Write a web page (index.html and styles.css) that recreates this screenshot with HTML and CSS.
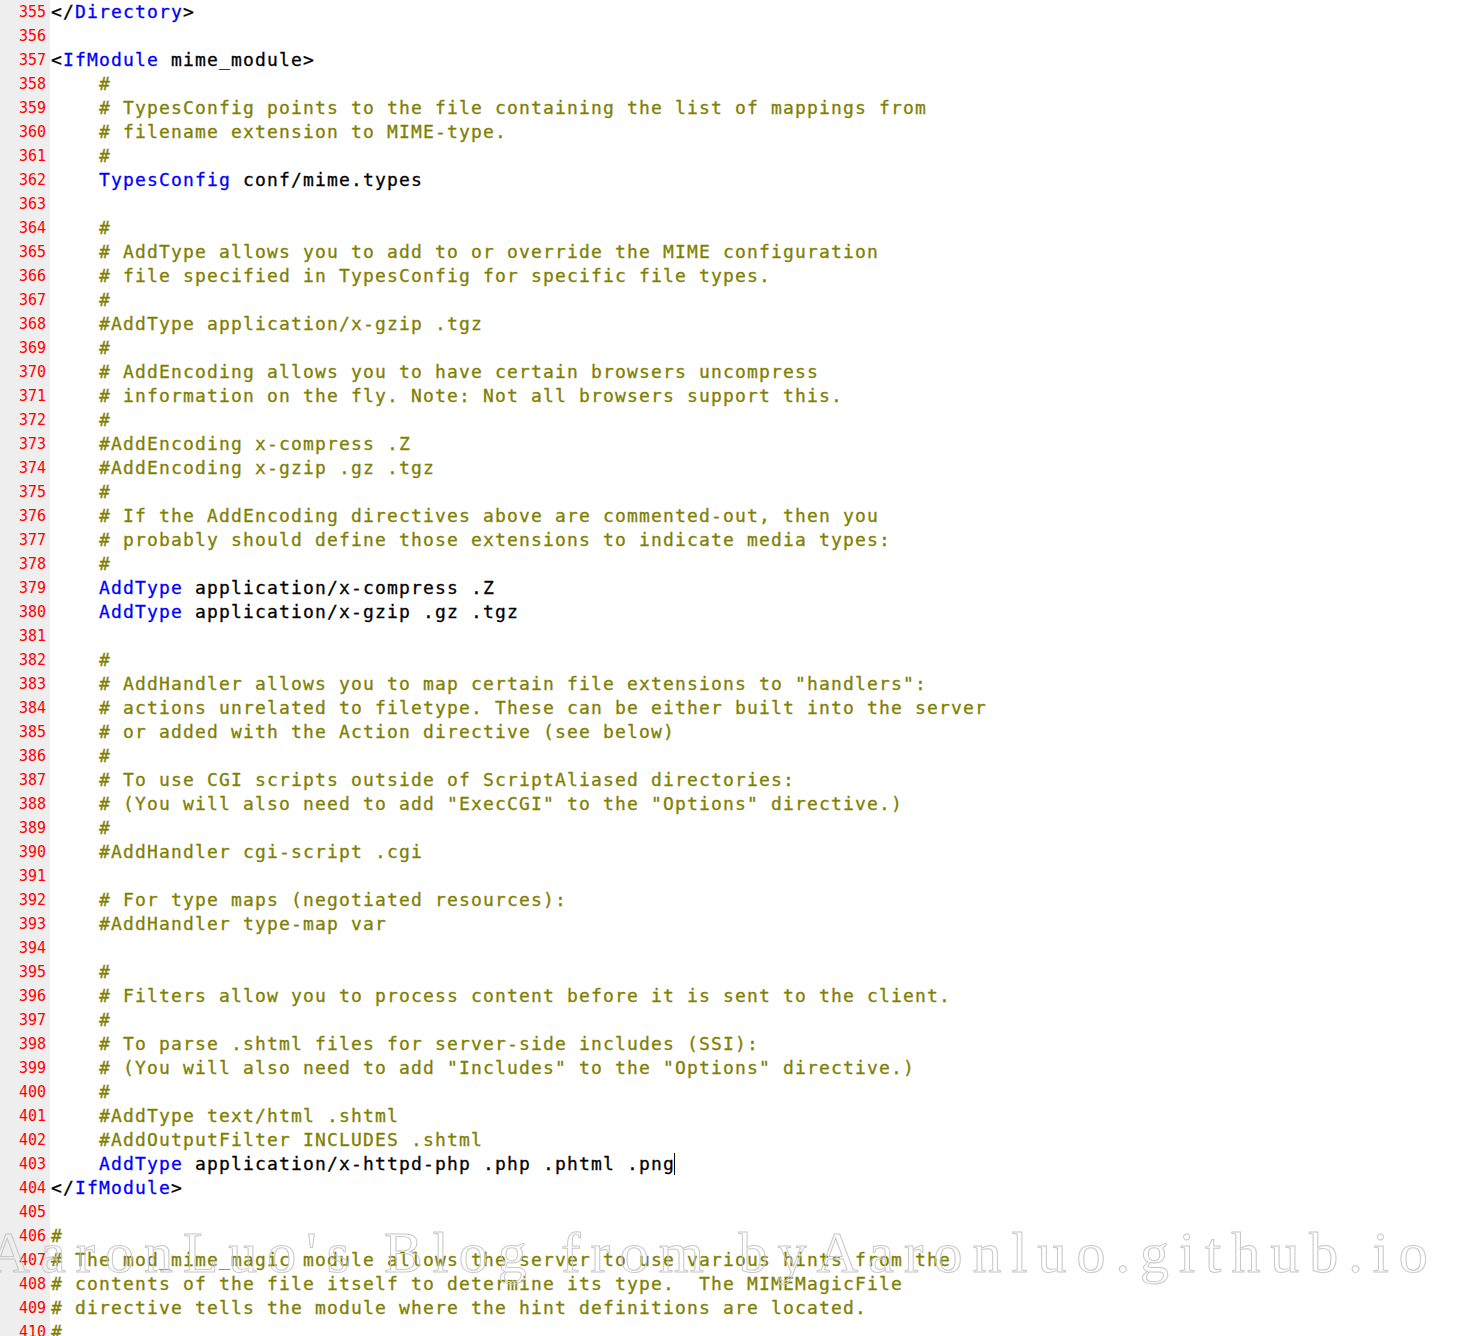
FILE: index.html
```html
<!DOCTYPE html>
<html>
<head>
<meta charset="utf-8">
<link rel="stylesheet" href="styles.css">
</head>
<body>
<div class="editor">
<div class="line"><span class="ln">355</span><span class="code">&lt;/<span class="k">Directory</span>&gt;</span></div>
<div class="line"><span class="ln">356</span><span class="code"></span></div>
<div class="line"><span class="ln">357</span><span class="code">&lt;<span class="k">IfModule</span> mime_module&gt;</span></div>
<div class="line"><span class="ln">358</span><span class="code">    <span class="c">#</span></span></div>
<div class="line"><span class="ln">359</span><span class="code">    <span class="c"># TypesConfig points to the file containing the list of mappings from</span></span></div>
<div class="line"><span class="ln">360</span><span class="code">    <span class="c"># filename extension to MIME-type.</span></span></div>
<div class="line"><span class="ln">361</span><span class="code">    <span class="c">#</span></span></div>
<div class="line"><span class="ln">362</span><span class="code">    <span class="k">TypesConfig</span> conf/mime.types</span></div>
<div class="line"><span class="ln">363</span><span class="code"></span></div>
<div class="line"><span class="ln">364</span><span class="code">    <span class="c">#</span></span></div>
<div class="line"><span class="ln">365</span><span class="code">    <span class="c"># AddType allows you to add to or override the MIME configuration</span></span></div>
<div class="line"><span class="ln">366</span><span class="code">    <span class="c"># file specified in TypesConfig for specific file types.</span></span></div>
<div class="line"><span class="ln">367</span><span class="code">    <span class="c">#</span></span></div>
<div class="line"><span class="ln">368</span><span class="code">    <span class="c">#AddType application/x-gzip .tgz</span></span></div>
<div class="line"><span class="ln">369</span><span class="code">    <span class="c">#</span></span></div>
<div class="line"><span class="ln">370</span><span class="code">    <span class="c"># AddEncoding allows you to have certain browsers uncompress</span></span></div>
<div class="line"><span class="ln">371</span><span class="code">    <span class="c"># information on the fly. Note: Not all browsers support this.</span></span></div>
<div class="line"><span class="ln">372</span><span class="code">    <span class="c">#</span></span></div>
<div class="line"><span class="ln">373</span><span class="code">    <span class="c">#AddEncoding x-compress .Z</span></span></div>
<div class="line"><span class="ln">374</span><span class="code">    <span class="c">#AddEncoding x-gzip .gz .tgz</span></span></div>
<div class="line"><span class="ln">375</span><span class="code">    <span class="c">#</span></span></div>
<div class="line"><span class="ln">376</span><span class="code">    <span class="c"># If the AddEncoding directives above are commented-out, then you</span></span></div>
<div class="line"><span class="ln">377</span><span class="code">    <span class="c"># probably should define those extensions to indicate media types:</span></span></div>
<div class="line"><span class="ln">378</span><span class="code">    <span class="c">#</span></span></div>
<div class="line"><span class="ln">379</span><span class="code">    <span class="k">AddType</span> application/x-compress .Z</span></div>
<div class="line"><span class="ln">380</span><span class="code">    <span class="k">AddType</span> application/x-gzip .gz .tgz</span></div>
<div class="line"><span class="ln">381</span><span class="code"></span></div>
<div class="line"><span class="ln">382</span><span class="code">    <span class="c">#</span></span></div>
<div class="line"><span class="ln">383</span><span class="code">    <span class="c"># AddHandler allows you to map certain file extensions to "handlers":</span></span></div>
<div class="line"><span class="ln">384</span><span class="code">    <span class="c"># actions unrelated to filetype. These can be either built into the server</span></span></div>
<div class="line"><span class="ln">385</span><span class="code">    <span class="c"># or added with the Action directive (see below)</span></span></div>
<div class="line"><span class="ln">386</span><span class="code">    <span class="c">#</span></span></div>
<div class="line"><span class="ln">387</span><span class="code">    <span class="c"># To use CGI scripts outside of ScriptAliased directories:</span></span></div>
<div class="line"><span class="ln">388</span><span class="code">    <span class="c"># (You will also need to add "ExecCGI" to the "Options" directive.)</span></span></div>
<div class="line"><span class="ln">389</span><span class="code">    <span class="c">#</span></span></div>
<div class="line"><span class="ln">390</span><span class="code">    <span class="c">#AddHandler cgi-script .cgi</span></span></div>
<div class="line"><span class="ln">391</span><span class="code"></span></div>
<div class="line"><span class="ln">392</span><span class="code">    <span class="c"># For type maps (negotiated resources):</span></span></div>
<div class="line"><span class="ln">393</span><span class="code">    <span class="c">#AddHandler type-map var</span></span></div>
<div class="line"><span class="ln">394</span><span class="code"></span></div>
<div class="line"><span class="ln">395</span><span class="code">    <span class="c">#</span></span></div>
<div class="line"><span class="ln">396</span><span class="code">    <span class="c"># Filters allow you to process content before it is sent to the client.</span></span></div>
<div class="line"><span class="ln">397</span><span class="code">    <span class="c">#</span></span></div>
<div class="line"><span class="ln">398</span><span class="code">    <span class="c"># To parse .shtml files for server-side includes (SSI):</span></span></div>
<div class="line"><span class="ln">399</span><span class="code">    <span class="c"># (You will also need to add "Includes" to the "Options" directive.)</span></span></div>
<div class="line"><span class="ln">400</span><span class="code">    <span class="c">#</span></span></div>
<div class="line"><span class="ln">401</span><span class="code">    <span class="c">#AddType text/html .shtml</span></span></div>
<div class="line"><span class="ln">402</span><span class="code">    <span class="c">#AddOutputFilter INCLUDES .shtml</span></span></div>
<div class="line"><span class="ln">403</span><span class="code">    <span class="k">AddType</span> application/x-httpd-php .php .phtml .png<span class="caret"></span></span></div>
<div class="line"><span class="ln">404</span><span class="code">&lt;/<span class="k">IfModule</span>&gt;</span></div>
<div class="line"><span class="ln">405</span><span class="code"></span></div>
<div class="line"><span class="ln">406</span><span class="code"><span class="c">#</span></span></div>
<div class="line"><span class="ln">407</span><span class="code"><span class="c"># The mod_mime_magic module allows the server to use various hints from the</span></span></div>
<div class="line"><span class="ln">408</span><span class="code"><span class="c"># contents of the file itself to determine its type.  The MIMEMagicFile</span></span></div>
<div class="line"><span class="ln">409</span><span class="code"><span class="c"># directive tells the module where the hint definitions are located.</span></span></div>
<div class="line"><span class="ln">410</span><span class="code"><span class="c">#</span></span></div>
</div>
<div class="watermark">AaronLuo's Blog from byAaronluo.github.io</div>
</body>
</html>
```
FILE: styles.css
```css
html, body {
  margin: 0;
  padding: 0;
  background: #ffffff;
  overflow: hidden;
}
body {
  position: relative;
  width: 1460px;
  height: 1336px;
}
.editor {
  display: flex;
  flex-direction: column;
}
.line {
  display: flex;
  height: 24px;
  line-height: 24px;
}
.ln {
  flex: 0 0 46px;
  width: 46px;
  padding-right: 4px;
  background: #eeeeee;
  color: #ff0000;
  font-family: "DejaVu Sans Mono", monospace;
  font-size: 15px;
  text-align: right;
}
.code {
  padding-left: 1px;
  white-space: pre;
  font-family: "DejaVu Sans Mono", monospace;
  font-size: 18px;
  letter-spacing: 1.163px;
  color: #000000;
  -webkit-text-stroke: 0.3px currentColor;
}
.k {
  color: #0000ff;
}
.c {
  color: #808000;
}
.caret {
  display: inline-block;
  width: 1px;
  height: 22px;
  background: #000000;
  vertical-align: -5px;
  margin-left: -1px;
}
.watermark {
  position: absolute;
  left: -12px;
  top: 1224px;
  white-space: nowrap;
  font-family: "Liberation Serif", serif;
  font-size: 58px;
  line-height: 58px;
  letter-spacing: 10px;
  color: transparent;
  -webkit-text-stroke: 1px #c8c8c8;
}
```
